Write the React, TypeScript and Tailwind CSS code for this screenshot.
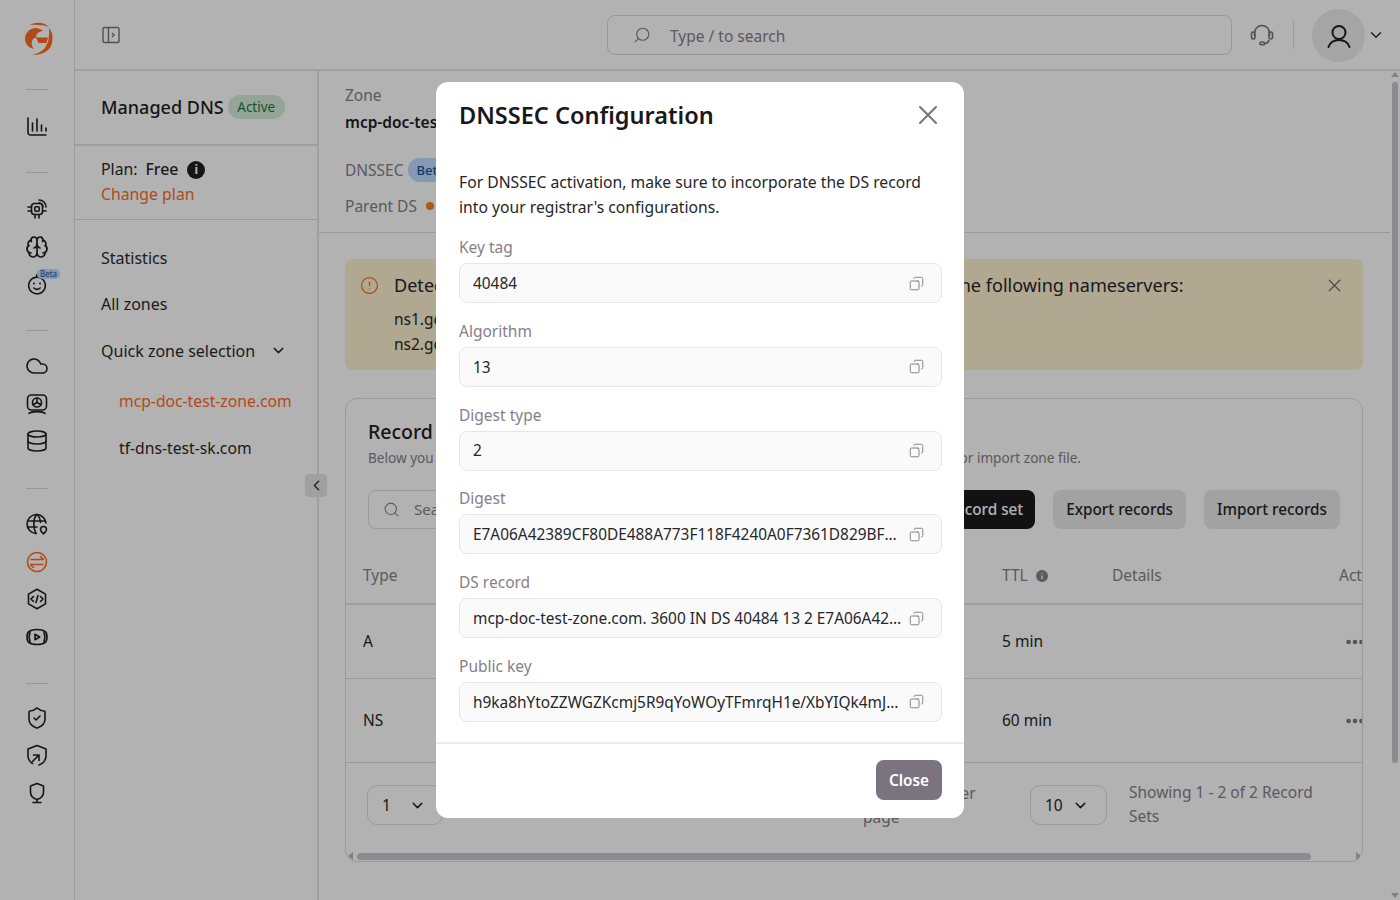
import { ChevronDown, ChevronLeft, Database, Cloud, Brain, ShieldCheck, X, CircleAlert, Search, Copy, Info, Ellipsis } from 'lucide-react';
import type { ReactNode } from 'react';

const Icon = ({ children, className = 'text-[#1f1f1f]' }: { children: ReactNode; className?: string }) => (
  <svg width="24" height="24" viewBox="0 0 24 24" fill="none" stroke="currentColor" strokeWidth="1.6" strokeLinecap="round" strokeLinejoin="round" className={className}>
    {children}
  </svg>
);

const Logo = () => (
  <svg width="30" height="34" viewBox="0 0 30 34" fill="currentColor" className="ml-[4px] text-[#ff6a1f]">
    <path d="M6 3C12 -.5 20 0 25 5 20 3 12 2.500 6 3Z" />
    <path d="M11 6C5 7 1 11 1 17c0 5 4 9 9 10-2-2-3-5-2-8 1-3 4-4 7-4h-3c0-3 3-5.500 7-6-2-2-5-3-8-3Z" />
    <path d="M12 15.500h12L22.500 21H14.500Z" />
    <path d="M25 6c4 4 4.500 12 2 18-3 6-10 9-19 9 7-2 11-4 13.500-8L24 20c1-5 1.500-10 1-14Z" />
  </svg>
);

const Rule = ({ className }: { className: string }) => <div className={`h-px w-[22px] bg-[#d8d8d8] ${className}`} />;

function Rail() {
  return (
    <aside className="flex w-[75px] shrink-0 flex-col items-center border-r border-[#e0e0e0] pt-[22px]">
      <Logo />
      <Rule className="mt-[33px]" />
      <div className="mt-[24px]">
        <Icon>
          <path d="M3 4v14.500A2.500 2.500 0 0 0 5.500 21H21M7.500 9v8M12 5v12M16.500 11v6M21 14v3" />
        </Icon>
      </div>
      <Rule className="mt-[34px]" />
      <div className="mt-[24px] flex flex-col items-center gap-[13.5px]">
        <Icon>
          <rect x="6.500" y="6.500" width="11" height="11" rx="3" />
          <rect x="9.800" y="9.800" width="4.400" height="4.400" rx="1" />
          <path d="M3 10h3.500M3 14h3.500M10 21v-3.500M14 21v-3.500M14 3a7 7 0 0 1 7 7M14 6a4 4 0 0 1 4 4M17.500 14H21" />
        </Icon>
        <Brain size={24} strokeWidth={1.7} className="text-[#1f1f1f]" />
        <div className="relative">
          <Icon>
            <circle cx="12" cy="13.500" r="8.300" strokeDasharray="3 0.8" />
            <path d="M12 5c-1-2 .5-3.500 2-2.500M8.800 16c1.800 1.500 4.600 1.500 6.400 0" />
            <path d="M9 11.500h.01M15 11.500h.01" strokeWidth="2" />
          </Icon>
          <span className="absolute left-[12px] top-[-3px] rounded-full bg-[#bddcff] px-[3px] text-[8px] leading-[10px] text-[#1d4f91]">Beta</span>
        </div>
      </div>
      <Rule className="mt-[34px]" />
      <div className="mt-[23px] flex flex-col items-center gap-[13.5px]">
        <Cloud size={24} strokeWidth={1.6} className="text-[#1f1f1f]" />
        <Icon>
          <rect x="2.500" y="3" width="19" height="15" rx="4" />
          <circle cx="12" cy="10.500" r="4.500" />
          <path d="M12 10.500V6M12 10.500l-3.900 2.200M12 10.500l3.900 2.200M4 21.500c2-2.500 14-2.500 16 0" />
        </Icon>
        <Database size={24} strokeWidth={1.6} className="text-[#1f1f1f]" />
      </div>
      <Rule className="mt-[35px] bg-[#c9c9c9]" />
      <div className="mt-[23px] flex flex-col items-center gap-[13.5px]">
        <Icon>
          <path d="M21 11A9.500 9.500 0 1 0 11 21.500" />
          <path d="M2.500 9h18M2.500 15H12M11.500 2.500C8 7 8 16 11 21.500M12.500 2.500c1.800 2.300 2.800 5 3 8" />
          <path d="M18.500 21.800c-2-1.700-3-3-3-4.300a3 3 0 0 1 6 0c0 1.300-1 2.600-3 4.300Z" />
        </Icon>
        <Icon className="text-[#ff6a1f]">
          <circle cx="12" cy="12" r="9.500" />
          <path d="M6 9.500h12.500l-3-3M18 14.500H5.500l3 3" />
        </Icon>
        <Icon>
          <path d="M12 2.200l8.500 4.900v9.800L12 21.800l-8.500-4.900V7.100Z" />
          <path d="M8.500 9.500L6 12l2.500 2.500M15.500 9.500L18 12l-2.500 2.500M13 8.500l-2 7" />
        </Icon>
        <Icon>
          <path d="M2 12c0-3 .5-4.500 2-5.500C6 5 8.500 4.500 12 4.500s6 .5 8 2c1.500 1 2 2.500 2 5.500s-.5 4.500-2 5.500c-2 1.500-4.500 2-8 2s-6-.5-8-2C2.500 16.500 2 15 2 12Z" />
          <path d="M5 7.500C4 10 4 14 5 16.500M19 7.500c1 2.500 1 6.500 0 9M10 9.200v5.600l4.700-2.800Z" />
        </Icon>
      </div>
      <Rule className="mt-[34px]" />
      <div className="mt-[22px] flex flex-col items-center gap-[13.5px]">
        <ShieldCheck size={24} strokeWidth={1.6} className="text-[#1f1f1f]" />
        <Icon>
          <path d="M7.500 20.500C5 19 3 16 3 12.500V6l9-3.500L21 6v6.500c0 4.500-3 8-7 9.500" />
          <path d="M7.500 18.500l6.500-6.500M8.500 12h5.500v5.500" />
        </Icon>
        <Icon>
          <path d="M12 2.500L18.500 5v6c0 3.500-2.500 6.500-6.500 7.500-4-1-6.500-4-6.500-7.500V5Z" />
          <path d="M12 18.500v3M8 21.500h8" />
        </Icon>
      </div>
    </aside>
  );
}

function ZoneSidebar() {
  return (
    <div className="relative flex w-[244px] shrink-0 flex-col border-r-2 border-[#e4e4e4]">
      <div className="flex h-[75px] items-center gap-[4px] border-b-2 border-[#e4e4e4] pl-[26px]">
        <span className="text-[18px] font-medium text-[#1f1f1f]">Managed DNS</span>
        <span className="mt-[-1px] rounded-full bg-[#d4ecd9] px-[9.500px] text-[13.500px] leading-[24px] text-[#1b7a3d]">Active</span>
      </div>
      <div className="h-[74px] border-b border-[#dcdcdc] pl-[26px] pt-[11px] text-[15.800px] leading-[25px]">
        <div className="flex items-center text-[#2a2a2a]">
          Plan:<span className="ml-[8px] font-medium">Free</span>
          <span className="ml-[9px] flex h-[18px] w-[18px] items-center justify-center rounded-full bg-[#1f1f1f] text-[12px] font-bold text-white">i</span>
        </div>
        <div className="text-[#ff6a1f]">Change plan</div>
      </div>
      <nav className="flex flex-col pl-[26px] pt-[26px] text-[16px] text-[#2a2a2a]">
        <span className="h-[46px] leading-[24px]">Statistics</span>
        <span className="h-[47px] leading-[24px]">All zones</span>
        <span className="flex h-[50px] items-start gap-[15px] leading-[24px]">
          Quick zone selection <ChevronDown size={17} className="mt-[3px]" />
        </span>
        <span className="ml-[18px] h-[47px] text-[15.700px] leading-[24px] text-[#ff6a1f]">mcp-doc-test-zone.com</span>
        <span className="ml-[18px] text-[15.700px] leading-[24px]">tf-dns-test-sk.com</span>
      </nav>
      <button className="absolute right-[-10px] top-[403px] flex h-[23px] w-[22px] items-center justify-center rounded-[4px] bg-[#e6e6e6] text-[#333]">
        <ChevronLeft size={17} />
      </button>
    </div>
  );
}

function CopyField({ label, value }: { label: string; value: string }) {
  return (
    <div className="h-[83.75px]">
      <div className="text-[15.500px] leading-[22px] text-[#85808a]">{label}</div>
      <div className="mt-[5px] flex h-[40px] items-center rounded-[8px] border border-[#e6e6e6] bg-[#fafafa] pl-[13px] pr-[17px] text-[15.400px] text-[#26262b]">
        <span className="min-w-0 flex-1 truncate pt-[1px]">{value}</span>
        <Copy size={15} strokeWidth={1.4} className="ml-[7px] shrink-0 -scale-x-100 text-[#77727e]" />
      </div>
    </div>
  );
}

function DnssecModal() {
  return (
    <div className="absolute inset-0 flex items-center justify-center bg-black/30">
      <div className="flex h-[736px] w-[528px] flex-col rounded-[12px] bg-white">
        <div className="flex items-center justify-between pl-[23px] pr-[26px] pt-[15px]">
          <h2 className="text-[23.500px] font-semibold leading-[36px] text-[#18181b]">DNSSEC Configuration</h2>
          <svg width="20" height="20" viewBox="0 0 20 20" fill="none" stroke="#77727e" strokeWidth="2" strokeLinecap="round">
            <path d="M2 2l16 16M18 2L2 18" />
          </svg>
        </div>
        <div className="flex-1 pl-[23px] pr-[22px] pt-[37px]">
          <p className="text-[15.700px] leading-[25px] text-[#26262b]">
            For DNSSEC activation, make sure to incorporate the DS record into your registrar's configurations.
          </p>
          <div className="mt-[16px]">
            <CopyField label="Key tag" value="40484" />
            <CopyField label="Algorithm" value="13" />
            <CopyField label="Digest type" value="2" />
            <CopyField label="Digest" value="E7A06A42389CF80DE488A773F118F4240A0F7361D829BF6E3C1A90D2" />
            <CopyField label="DS record" value="mcp-doc-test-zone.com. 3600 IN DS 40484 13 2 E7A06A42389CF80DE488A773F118F42" />
            <CopyField label="Public key" value="h9ka8hYtoZZWGZKcmj5R9qYoWOyTFmrqH1e/XbYIQk4mJ2sPdLw8vNc" />
          </div>
        </div>
        <div className="flex h-[76px] items-start justify-end border-t-2 border-[#ececec] pr-[22px] pt-[16px]">
          <button className="h-[40px] w-[66px] rounded-[8px] bg-[#7b7480] text-[15.300px] font-semibold text-white">Close</button>
        </div>
      </div>
    </div>
  );
}

function RecordCard() {
  return (
    <section className="mt-[28px] h-[464px] overflow-hidden rounded-[12px] border border-[#dcdcdc]">
      <div className="h-[147px] px-[22px] pt-[19px]">
        <h3 className="text-[19.500px] font-medium leading-[28px] text-[#1f1f1f]">Record sets</h3>
        <p className="mt-[1px] whitespace-nowrap text-[13.600px] leading-[22px] text-[#85808a]">
          Below you can manage records of your DNS zone: add a new record set, edit existing, export or import zone file.
        </p>
        <div className="mt-[21px] flex items-center justify-between">
          <div className="flex h-[39px] w-[300px] items-center gap-[14px] rounded-[8px] border border-[#dcdcdc] px-[14px] text-[15px] text-[#85808a]">
            <Search size={17} strokeWidth={1.5} />
            Search
          </div>
          <div className="flex items-center gap-[18px] text-[15.300px] font-medium">
            <button className="h-[39px] rounded-[8px] bg-[#1b1b1b] px-[12px] text-white">Add record set</button>
            <button className="h-[39px] rounded-[8px] bg-[#e8e8ea] px-[13px] text-[#26262b]">Export records</button>
            <button className="h-[39px] rounded-[8px] bg-[#e8e8ea] px-[13px] text-[#26262b]">Import records</button>
          </div>
        </div>
      </div>
      <div className="grid h-[59px] grid-cols-[639px_110px_227px_100px] items-center border-b-2 border-[#e4e4e4] pt-[2px] pl-[17px] text-[15.500px] text-[#85808a]">
        <span>Type</span>
        <span className="flex items-center gap-[6px]">
          TTL
          <Info size={16} fill="#85808a" stroke="#ffffff" />
        </span>
        <span>Details</span>
        <span>Actions</span>
      </div>
      <div className="grid h-[74px] grid-cols-[639px_337px_100px] items-center border-b border-[#dcdcdc] pl-[17px] text-[15.500px] text-[#26262b]">
        <span>A</span>
        <span>5 min</span>
        <Ellipsis size={22} strokeWidth={3} className="ml-[5px] text-[#77727e]" />
      </div>
      <div className="grid h-[84px] grid-cols-[639px_337px_100px] items-center border-b border-[#dcdcdc] pl-[17px] text-[15.500px] text-[#26262b]">
        <span>NS</span>
        <span>60 min</span>
        <Ellipsis size={22} strokeWidth={3} className="ml-[5px] text-[#77727e]" />
      </div>
      <div className="flex h-[87px] pl-[21px] pt-[22px] text-[15.500px] leading-[24px]">
        <div className="flex h-[40px] w-[76px] items-center justify-between rounded-[10px] border border-[#dcdcdc] pl-[14px] pr-[16px] text-[#26262b]">
          1 <ChevronDown size={17} />
        </div>
        <div className="ml-[420px] mt-[-4px] h-[48px] w-[116px] text-[#85808a]">Record sets per page</div>
        <div className="ml-[51px] flex h-[40px] w-[77px] items-center justify-between rounded-[10px] border border-[#dcdcdc] pl-[14px] pr-[17px] text-[#26262b]">
          10 <ChevronDown size={17} />
        </div>
        <div className="ml-[22px] mt-[-5px] h-[48px] w-[200px] text-[#85808a]">Showing 1 - 2 of 2 Record Sets</div>
      </div>
      <div className="mt-[2px] flex items-center">
        <div className="ml-[2px] h-0 w-0 border-y-[4px] border-r-[5px] border-y-transparent border-r-[#b8b8bc]" />
        <div className="ml-[4px] h-[7px] w-[954px] rounded-full bg-[#c9c9cc]" />
        <div className="ml-[45px] h-0 w-0 border-y-[4px] border-l-[5px] border-y-transparent border-l-[#b8b8bc]" />
      </div>
    </section>
  );
}

export default function App() {
  return (
    <div className="relative flex h-[900px] w-[1400px] overflow-hidden bg-white font-['Noto_Sans',sans-serif]">
      <Rail />
      <div className="flex min-w-0 flex-1 flex-col">
        <header className="flex h-[71px] shrink-0 items-center border-b-2 border-[#e4e4e4]">
          <svg width="20" height="20" viewBox="0 0 20 20" fill="none" stroke="#77727e" strokeWidth="1.4" className="ml-[26px]">
            <rect x="2" y="2.500" width="16" height="15" rx="1.500" />
            <path d="M7.500 2.500v15M11 8l2 2-2 2" />
          </svg>
          <div className="ml-[486px] flex h-[40px] w-[625px] items-center rounded-[8px] border border-[#d8d8d8] pl-[25px] text-[15.500px] text-[#85808a]">
            <Search size={18} strokeWidth={1.5} className="-scale-x-100" />
            <span className="ml-[19px] mt-[4px]">Type / to search</span>
          </div>
          <svg width="24" height="24" viewBox="0 0 24 24" fill="none" stroke="#77727e" strokeWidth="1.6" className="ml-[18px]">
            <path d="M4.500 13V10a7.500 7.500 0 0 1 15 0v3M19 17c-.5 2.500-2.500 3.500-5 3.500" />
            <rect x="1.500" y="9" width="3.500" height="7" rx="1.500" />
            <rect x="19" y="9" width="3.500" height="7" rx="1.500" />
            <rect x="10" y="19" width="4.500" height="2.800" rx="1.400" />
          </svg>
          <div className="ml-[19px] h-[28px] w-px bg-[#dcdcdc]" />
          <div className="ml-[18px] mt-[2px] flex h-[53px] w-[53px] items-center justify-center rounded-full bg-[#ececee]">
            <svg width="26" height="26" viewBox="0 0 26 26" fill="none" stroke="#1f1f1f" strokeWidth="2" strokeLinecap="round">
              <circle cx="13" cy="9.500" r="6.500" />
              <path d="M2.500 24c1.500-4.500 5-7 10.500-7s9 2.500 10.500 7" />
            </svg>
          </div>
          <ChevronDown size={18} strokeWidth={1.6} className="ml-[2px] text-[#1f1f1f]" />
        </header>
        <div className="flex min-h-0 flex-1">
          <ZoneSidebar />
          <main className="min-w-0 flex-1">
            <div className="h-[162px] border-b border-[#dcdcdc] pl-[26px] pt-[12px] text-[15.500px]">
              <div className="leading-[24px] text-[#85808a]">Zone</div>
              <div className="mt-[3px] font-semibold leading-[24px] text-[#1f1f1f]">mcp-doc-test-zone.com</div>
              <div className="mt-[24px] flex items-center gap-[4px] leading-[24px] text-[#85808a]">
                DNSSEC
                <span className="rounded-full bg-[#bddcff] px-[9px] text-[13px] font-medium text-[#1d4f91]">Beta</span>
              </div>
              <div className="mt-[12px] flex items-center gap-[9px] leading-[24px] text-[#85808a]">
                Parent DS
                <span className="h-[8px] w-[8px] rounded-full bg-[#f2841d]" />
              </div>
            </div>
            <div className="pl-[26px] pr-[27px] pt-[26px]">
              <div className="flex h-[111px] rounded-[8px] bg-[#fdf1cf] pl-[15px] pr-[18px] pt-[14px]">
                <CircleAlert size={19} strokeWidth={1.6} className="mt-[3px] shrink-0 text-[#ff6a1f]" />
                <div className="ml-[15px] flex-1">
                  <div className="whitespace-nowrap text-[18.070px] leading-[25px] text-[#26262b]">
                    Detected DNS zone is not delegated. Update your registrar to use the following nameservers:
                  </div>
                  <div className="mt-[9px] text-[15.500px] leading-[25px] text-[#26262b]">
                    ns1.gcorelabs.net
                    <br />
                    ns2.gcdn.services
                  </div>
                </div>
                <X size={21} strokeWidth={1.6} className="mt-[2px] shrink-0 text-[#77727e]" />
              </div>
              <RecordCard />
            </div>
          </main>
          <div className="flex w-[10px] shrink-0 flex-col items-center pt-[1px] pb-[2px]">
            <div className="h-0 w-0 border-x-[4px] border-b-[5px] border-x-transparent border-b-[#b8b8bc]" />
            <div className="mt-[5px] h-[681px] w-[6px] rounded-full bg-[#c9c9cc]" />
            <div className="mt-auto h-0 w-0 border-x-[4px] border-t-[5px] border-x-transparent border-t-[#b8b8bc]" />
          </div>
        </div>
      </div>
      <DnssecModal />
    </div>
  );
}
